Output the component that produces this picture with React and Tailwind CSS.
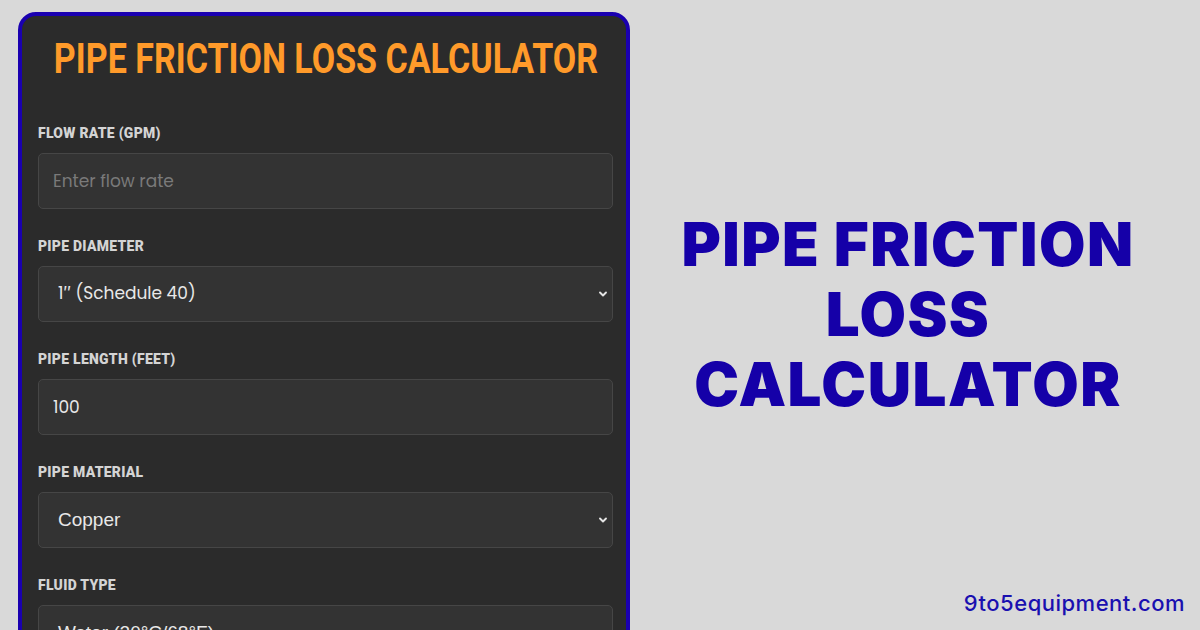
import React from "react";

const fields = [
  { label: "Flow Rate (GPM)", type: "input", placeholder: "Enter flow rate", value: "" },
  { label: "Pipe Diameter", type: "select", value: "1″ (Schedule 40)", poppins: true },
  { label: "Pipe Length (Feet)", type: "input", value: "100" },
  { label: "Pipe Material", type: "select", value: "Copper" },
  { label: "Fluid Type", type: "select", value: "Water (20°C/68°F)" },
];

const Chevron = () => (
  <svg width="10" height="10" viewBox="0 0 10 10" className="shrink-0">
    <path d="M2 3.5 L5 6.5 L8 3.5" fill="none" stroke="#e5e5e5" strokeWidth="1.9" strokeLinecap="round" strokeLinejoin="round" />
  </svg>
);

const Field = ({ field }) => (
  <div className="flex flex-col">
    <label className="h-[17px] whitespace-nowrap">
      <span className="inline-block origin-left scale-x-[0.93] font-['Roboto',sans-serif] font-black text-[15px] leading-[17px] uppercase tracking-[0.3px] text-[#d4d4d4]">
        {field.label}
      </span>
    </label>
    <div className="mt-4 h-[56px] rounded-[5px] border border-[#464646] bg-[#333333] flex items-center">
      {field.type === "input" ? (
        <input
          readOnly
          value={field.value}
          placeholder={field.placeholder}
          className="w-full h-full bg-transparent px-[14px] outline-none font-['Poppins','Inter',sans-serif] text-[17px] text-[#e8e8e8] placeholder:text-[#7a7a7a]"
        />
      ) : (
        <div className="w-full flex items-center justify-between pl-[19px] pr-[4px]">
          <span
            className={
              field.poppins
                ? "font-['Poppins','Inter',sans-serif] text-[17px] text-[#e8e8e8]"
                : "font-['Liberation_Sans',Arial,sans-serif] text-[19px] text-[#e8e8e8]"
            }
          >
            {field.value}
          </span>
          <Chevron />
        </div>
      )}
    </div>
  </div>
);

export default function App() {
  return (
    <div className="w-[1200px] h-[630px] overflow-hidden bg-[#d9d9d9] flex">
      <div className="ml-[18px] mt-[12px] w-[612px] h-[700px] shrink-0 rounded-[18px] border-4 border-[#1a00b0] bg-[#2b2b2b] pt-[20px] pl-4 pr-[13px]">
        <div className="flex justify-center whitespace-nowrap h-[46px]">
          <h1 className="inline-block scale-x-[0.81] font-['Roboto',sans-serif] font-bold text-[42px] leading-[46px] text-[#ff9a2a]">
            PIPE FRICTION LOSS CALCULATOR
          </h1>
        </div>
        <div className="mt-[38px] flex flex-col gap-[24px]">
          {fields.map((f) => (
            <Field key={f.label} field={f} />
          ))}
        </div>
      </div>
      <div className="flex-1 flex flex-col">
        <div className="flex-1 flex items-center justify-center pr-[14px] pt-[40px]">
          <h2 className="text-center font-['Inter',sans-serif] font-black text-[60px] leading-[70px] text-[#1500a8] tracking-[1.5px]">
            PIPE FRICTION
            <br />
            LOSS
            <br />
            CALCULATOR
          </h2>
        </div>
        <div className="flex justify-end pr-[15px] pb-[10px]">
          <span className="font-['Inter',sans-serif] font-medium text-[22px] text-[#1a10b0] tracking-[0.5px]">
            9to5equipment.com
          </span>
        </div>
      </div>
    </div>
  );
}
